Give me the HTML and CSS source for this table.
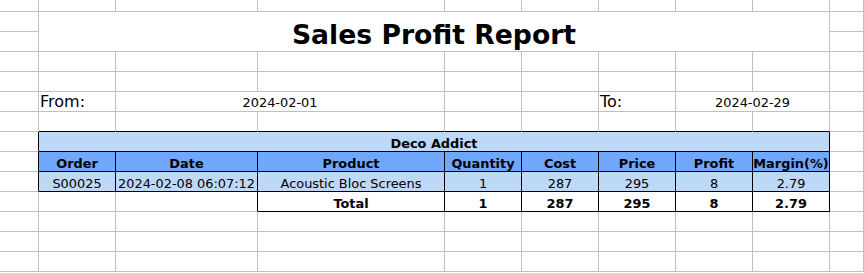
FILE: index.html
```html
<!DOCTYPE html>
<html>
<head>
<meta charset="utf-8">
<link rel="stylesheet" href="styles.css">
</head>
<body>
<div class="sheet">
  <!-- r0 -->
  <div class="c"></div><div class="c"></div><div class="c"></div><div class="c"></div><div class="c"></div><div class="c"></div><div class="c"></div><div class="c"></div><div class="c"></div><div class="c"></div>
  <!-- r1-r2 title -->
  <div class="c"></div><div class="c title">Sales Profit Report</div><div class="c"></div>
  <div class="c"></div><div class="c"></div>
  <!-- r3 -->
  <div class="c"></div><div class="c"></div><div class="c"></div><div class="c"></div><div class="c"></div><div class="c"></div><div class="c"></div><div class="c"></div><div class="c"></div><div class="c"></div>
  <!-- r4 -->
  <div class="c"></div><div class="c"></div><div class="c"></div><div class="c"></div><div class="c"></div><div class="c"></div><div class="c"></div><div class="c"></div><div class="c"></div><div class="c"></div>
  <!-- r5 -->
  <div class="c"></div><div class="c label">From:</div><div class="c span2 ctr date">2024-02-01</div><div class="c"></div><div class="c"></div><div class="c label">To:</div><div class="c span2 ctr date">2024-02-29</div><div class="c"></div>
  <!-- r6 -->
  <div class="c"></div><div class="c kb"></div><div class="c kb"></div><div class="c kb"></div><div class="c kb"></div><div class="c kb"></div><div class="c kb"></div><div class="c kb"></div><div class="c kb"></div><div class="c"></div>
  <!-- r7 -->
  <div class="c kr"></div><div class="c span8 ctr t bold light kr kb">Deco Addict</div><div class="c"></div>
  <!-- r8 -->
  <div class="c kr"></div>
  <div class="c ctr t bold head kr kb">Order</div>
  <div class="c ctr t bold head kr kb">Date</div>
  <div class="c ctr t bold head kr kb">Product</div>
  <div class="c ctr t bold head kr kb">Quantity</div>
  <div class="c ctr t bold head kr kb">Cost</div>
  <div class="c ctr t bold head kr kb">Price</div>
  <div class="c ctr t bold head kr kb">Profit</div>
  <div class="c ctr t bold head kr kb">Margin(%)</div>
  <div class="c"></div>
  <!-- r9 -->
  <div class="c kr"></div>
  <div class="c ctr t light kr kb">S00025</div>
  <div class="c ctr t light kr kb">2024-02-08 06:07:12</div>
  <div class="c ctr t light kr kb">Acoustic Bloc Screens</div>
  <div class="c ctr t light kr kb">1</div>
  <div class="c ctr t light kr kb">287</div>
  <div class="c ctr t light kr kb">295</div>
  <div class="c ctr t light kr kb">8</div>
  <div class="c ctr t light kr kb">2.79</div>
  <div class="c"></div>
  <!-- r10 -->
  <div class="c"></div>
  <div class="c"></div>
  <div class="c kr"></div>
  <div class="c ctr t bold kr kb">Total</div>
  <div class="c ctr t bold kr kb">1</div>
  <div class="c ctr t bold kr kb">287</div>
  <div class="c ctr t bold kr kb">295</div>
  <div class="c ctr t bold kr kb">8</div>
  <div class="c ctr t bold kr kb">2.79</div>
  <div class="c"></div>
  <!-- r11 -->
  <div class="c"></div><div class="c"></div><div class="c"></div><div class="c"></div><div class="c"></div><div class="c"></div><div class="c"></div><div class="c"></div><div class="c"></div><div class="c"></div>
  <!-- r12 -->
  <div class="c"></div><div class="c"></div><div class="c"></div><div class="c"></div><div class="c"></div><div class="c"></div><div class="c"></div><div class="c"></div><div class="c"></div><div class="c"></div>
  <!-- r13 -->
  <div class="c"></div><div class="c"></div><div class="c"></div><div class="c"></div><div class="c"></div><div class="c"></div><div class="c"></div><div class="c"></div><div class="c"></div><div class="c"></div>
</div>
</body>
</html>
```
FILE: styles.css
```css
html, body {
  margin: 0;
  padding: 0;
  background: #ffffff;
  overflow: hidden;
}

.sheet {
  display: grid;
  grid-template-columns: 39px 77px 142px 187px 77px 77px 77px 77px 77px 1fr;
  grid-template-rows: 12px repeat(13, 20px);
  width: 864px;
  height: 273px;
  overflow: hidden;
  font-family: "DejaVu Sans", sans-serif;
  color: #000000;
}

.c {
  box-sizing: border-box;
  border-right: 1px solid #c0c0c0;
  border-bottom: 1px solid #c0c0c0;
  display: flex;
  align-items: flex-end;
  white-space: nowrap;
  overflow: hidden;
  line-height: 1;
}

.kr { border-right-color: #000000; }
.kb { border-bottom-color: #000000; }

.span2 { grid-column: span 2; }
.span8 { grid-column: span 8; }

.title {
  grid-column: span 8;
  grid-row: span 2;
  justify-content: center;
  font-size: 26.67px;
  font-weight: bold;
  padding-bottom: 2px;
}

.label {
  font-size: 16px;
  padding-left: 1px;
  padding-bottom: 1px;
}

.ctr { justify-content: center; }

.date {
  font-size: 12.9px;
  padding-bottom: 1px;
}

.t {
  font-size: 12.9px;
  padding-bottom: 0;
}

.bold { font-weight: bold; }

.light { background: #bed8f8; }
.head { background: #6fa8fa; }
```
